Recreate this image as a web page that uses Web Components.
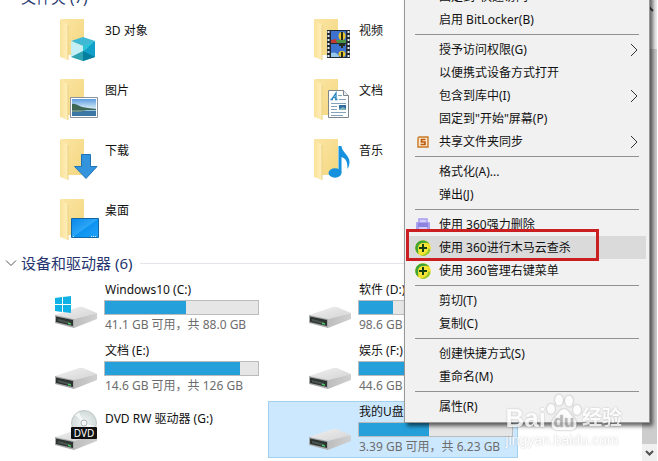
<!DOCTYPE html>
<html lang="zh-CN">
<head>
<meta charset="utf-8">
<title>此电脑</title>
<style>
  body {
    margin: 0;
    background: #fff;
    color: #111;
    font: 12px/16px "Noto Sans", "Noto Sans CJK SC", sans-serif;
  }
</style>
</head>
<body>
<file-explorer>
  <item-group label="文件夹 (7)">
    <folder-tile kind="cube" name="3D 对象"></folder-tile>
    <folder-tile kind="video" name="视频"></folder-tile>
    <folder-tile kind="picture" name="图片"></folder-tile>
    <folder-tile kind="document" name="文档"></folder-tile>
    <folder-tile kind="download" name="下载"></folder-tile>
    <folder-tile kind="music" name="音乐"></folder-tile>
    <folder-tile kind="desktop" name="桌面"></folder-tile>
  </item-group>
  <item-group label="设备和驱动器 (6)">
    <drive-tile kind="windows" name="Windows10 (C:)" used="53">41.1 GB 可用，共 88.0 GB</drive-tile>
    <drive-tile name="软件 (D:)" used="22">98.6 GB</drive-tile>
    <drive-tile name="文档 (E:)" used="88">14.6 GB 可用，共 126 GB</drive-tile>
    <drive-tile name="娱乐 (F:)" used="80">44.6 GB</drive-tile>
    <drive-tile kind="dvd" name="DVD RW 驱动器 (G:)"></drive-tile>
    <drive-tile name="我的U盘" used="46" selected>3.39 GB 可用，共 6.23 GB</drive-tile>
  </item-group>

  <context-menu slot="overlay">
    <menu-item>固定到"快速访问"</menu-item>
    <menu-item>启用 BitLocker(B)</menu-item>
    <menu-line></menu-line>
    <menu-item more>授予访问权限(G)</menu-item>
    <menu-item>以便携式设备方式打开</menu-item>
    <menu-item more>包含到库中(I)</menu-item>
    <menu-item>固定到"开始"屏幕(P)</menu-item>
    <menu-item icon="sync" more>共享文件夹同步</menu-item>
    <menu-line></menu-line>
    <menu-item>格式化(A)...</menu-item>
    <menu-item>弹出(J)</menu-item>
    <menu-line></menu-line>
    <menu-item icon="shred">使用 360强力删除</menu-item>
    <menu-item icon="safe" active>使用 360进行木马云查杀</menu-item>
    <menu-item icon="safe">使用 360管理右键菜单</menu-item>
    <menu-line></menu-line>
    <menu-item>剪切(T)</menu-item>
    <menu-item>复制(C)</menu-item>
    <menu-line></menu-line>
    <menu-item>创建快捷方式(S)</menu-item>
    <menu-item>重命名(M)</menu-item>
    <menu-line></menu-line>
    <menu-item>属性(R)</menu-item>
  </context-menu>
  <site-watermark slot="overlay"></site-watermark>
</file-explorer>

<script>
const folderBase = `
  <path d="M6 6h23v36H13z" fill="url(#back)"/>
  <path d="M5 6l8 6v35l-8-3z" fill="url(#flap)"/>
  <path d="M13 12v35" stroke="#ecd083" stroke-width="1"/>
`;

const folderDefs = `
  <defs>
    <linearGradient id="back" x2="1" y2="1"><stop stop-color="#fbe5a4"/><stop offset="1" stop-color="#f3d67e"/></linearGradient>
    <linearGradient id="flap" x2="1"><stop stop-color="#fae19a"/><stop offset="1" stop-color="#feefbb"/></linearGradient>
    <linearGradient id="sky" y2="1" x2="0"><stop stop-color="#5d9be0"/><stop offset=".5" stop-color="#c9e4f5"/><stop offset="1" stop-color="#4c86bb"/></linearGradient>
    <linearGradient id="screen" x2="1" y2="1"><stop stop-color="#0a86e8"/><stop offset=".5" stop-color="#2ba6f7"/><stop offset=".52" stop-color="#0d93f0"/><stop offset="1" stop-color="#1ea2fa"/></linearGradient>
  </defs>
`;

const badges = {
  cube: `
    <path d="M16 28l12-4 12 4-12 5z" fill="#3fb9d3"/>
    <path d="M16 28l12 5v15l-12-4z" fill="#c4eff5"/>
    <path d="M28 33l12-5v16l-12 4z" fill="#129fca"/>
    <path d="M28 33l12-5-12 11z" fill="#2cc4d6"/>
    <path d="M16 44l12-6v10z" fill="#2fa3b2"/>
    <path d="M28 38l12 6-12 4z" fill="#067f9f"/>`,
  picture: `
    <path d="M15.500 24.500h27v20h-27z" fill="#fff" stroke="#8b9299"/>
    <path d="M17 26h24v17H17z" fill="url(#sky)"/>
    <path d="M17 31c4-1 6 2 10 3l6 1 8 1v1H17z" fill="#3e6656"/>
    <path d="M17 38h24v5H17z" fill="#3b77a5"/>
    <path d="M17 37h15l-7 2h-8z" fill="#6e9184"/>`,
  download: `<path d="M26.500 21.500h9v12h6.500L31 45.500l-11.500-12h7z" fill="#3393dc" stroke="#1f74b8"/>`,
  desktop: `
    <path d="M16.500 25.500h27v19h-27z" fill="url(#screen)" stroke="#1267a4"/>
    <path d="M18 43.500h2M36 43.500h6" stroke="#d4efff" stroke-dasharray="1 1"/>`,
  video: `
    <path d="M18 17h23v28H18z" fill="#222b33"/>
    <path d="M19.500 18v27M39.500 18v27" stroke="#e8eef0" stroke-width="2" stroke-dasharray="2 2"/>
    <path d="M22 18h15v12H22zM22 31h15v13H22z" fill="#3d72cf"/>
    <path d="M22 27l5-1 2 4h-7z" fill="#c43a33"/><path d="M27 27h10v3h-9z" fill="#4c9447"/>
    <ellipse cx="33" cy="23" rx="3.500" ry="4" fill="#e8c52d"/><path d="M33 19v8" stroke="#292d18" stroke-width="2"/>
    <path d="M22 40q5-2 8 3v1h-8z" fill="#97c7e9"/>
    <ellipse cx="33" cy="41" rx="3.500" ry="3" fill="#e8c52d"/><path d="M33 31v4M33 39v5M30 32h6" stroke="#292d18" stroke-width="2"/>`,
  document: `
    <path d="M19.500 17.500h15l5 5v22h-20z" fill="#fff" stroke="#7f868b"/>
    <path d="M34.500 17.500v5h5" fill="#e9eef2" stroke="#7f868b"/>
    <path d="M22.500 26.500l4.500-6.500v6.500M24 24.500h3M21.500 26.500h2.500M26 26.500h2.500" fill="none" stroke="#2585bc" stroke-width="1.300"/>
    <path d="M29 22.500h4M30 26.500h7M22 30.500h15M22 33.500h6M22 36.500h6M22 39.500h15M22 42.500h12" stroke="#84a2b9"/>
    <path d="M30 32h7v5h-7z" fill="#2f6d9f"/><path d="M30 36l4-2 3 2v1h-7z" fill="#80b3b7"/>`,
  music: `
    <ellipse cx="26" cy="40" rx="6.500" ry="4.700" fill="#1591dd"/>
    <path d="M29.500 13h3c0 6 8 9 8 16 0 3-1 5-2 7 0-7-1-10-6-12v16h-3z" fill="#1591dd"/>`
};

const driveDefs = `
  <defs>
    <linearGradient id="top" x2="1" y2="1"><stop stop-color="#f1f1f1"/><stop offset="1" stop-color="#d3d3d4"/></linearGradient>
    <linearGradient id="side" x2="1"><stop stop-color="#bdbdbe"/><stop offset="1" stop-color="#d0d0d1"/></linearGradient>
    <radialGradient id="disc"><stop stop-color="#aebfbe"/><stop offset=".25" stop-color="#e9efef"/><stop offset="1" stop-color="#d2d9d9"/></radialGradient>
  </defs>
`;

const driveBase = `
  <path d="M0 36l24-8q2-.500 4 0l14 6-23 6z" fill="url(#top)"/>
  <path d="M19 40l23-6v6l-23 9z" fill="url(#side)"/>
  <path d="M0 36l19 4v9L0 44z" fill="#a8a9aa"/>
  <path d="M1 37.500l17 3.500v6L1 43z" fill="#2e3432"/>
  <path d="M3 40l12 3v2L3 42z" fill="#4b5552"/>
  <path d="M13 43.500l3 .700v1.600l-3-.700z" fill="#48cf64"/>
`;

const driveExtras = {
  windows: `<path d="M0 19l7-1v7H0zM8 18l8-1v8H8zM0 26h7v7l-7-1zM8 26h8v8l-8-1z" fill="#10b2e6"/>`,
  dvd: `
    <circle cx="29" cy="22" r="12.500" fill="url(#disc)" stroke="#c0c8c8"/>
    <path d="M29 22l-9-8 4-3zM29 22l9 9 3-5z" fill="#fff" opacity=".7"/>
    <circle cx="29" cy="22" r="3" fill="#f7f7f7" stroke="#adb7b6"/>
    <rect x="16" y="26" width="26" height="12" rx="1" fill="#111"/>
    <text x="29" y="36" text-anchor="middle" fill="#fff" font-size="10">DVD</text>`
};

const menuIcons = {
  sync: `
    <path d="M4 3h9v10H3V4z" fill="#fbe8cf" stroke="#c97a27" stroke-width="1.400"/>
    <path d="M10.500 5.500h-4v2.500h3.500v2.500H5.500" fill="none" stroke="#bd5d10" stroke-width="1.700"/>`,
  shred: `
    <path d="M4 5V2h8v3" fill="#d5cffb" stroke="#a79dec" stroke-width="1.500"/>
    <rect x="1" y="5" width="14" height="9" rx="1" fill="#aaa2f0"/>
    <path d="M3 6h10v4H3z" fill="#8b83dd"/><path d="M4 10h8v4H4z" fill="#cfcaff"/>`,
  safe: `
    <circle cx="8" cy="8" r="7.800" fill="#f2e02c"/>
    <path d="M.500 6A7.800 7.800 0 0 1 14.500 4C11 1.500 5 3 3.500 9 3 11 3 12 3.500 14A7.800 7.800 0 0 1 .500 6z" fill="#3fa535"/>
    <path d="M15.500 10A7.800 7.800 0 0 1 5 15.200c4 .300 8-2 8.500-7.200z" fill="#8dc831"/>
    <circle cx="8" cy="8" r="5" fill="#f5e63c"/>
    <path d="M8 4v8M4 8h8" stroke="#173f16" stroke-width="2"/>`
};

class FileExplorer extends HTMLElement {
  constructor() {
    super();
    this.attachShadow({ mode: 'open' });
    this.shadowRoot.innerHTML = `
      <style>
        :host {
          display: flex;
          position: relative;
          height: 100vh;
          overflow: hidden;
        }

        main {
          flex: 1;
          min-width: 0;
          /* the list is scrolled past the top of the window */
          margin-top: -16px;
        }
      </style>
      <main><slot></slot></main>
      <scroll-rail></scroll-rail>
      <slot name="overlay"></slot>
    `;
  }
}

class ItemGroup extends HTMLElement {
  constructor() {
    super();
    this.attachShadow({ mode: 'open' });
    this.shadowRoot.innerHTML = `
      <style>
        :host {
          display: block;
          padding-top: 1px;
        }

        header {
          display: flex;
          align-items: center;
          height: 24px;
          padding-left: 5px;
          margin-bottom: 4px;
        }

        button {
          display: flex;
          width: 16px;
          padding: 0;
          border: 0;
          background: none;
        }

        h2 {
          margin: 0;
          color: #26356f;
          font-size: 15px;
          font-weight: 400;
          line-height: 24px;
          white-space: nowrap;
        }

        hr {
          flex: 1;
          height: 1px;
          margin: 0 0 0 8px;
          border: 0;
          background: #e3e6ea;
        }

        .tiles {
          display: grid;
          grid-template-columns: repeat(auto-fill, 250px);
          gap: var(--row-gap, 3px) 4px;
          padding-left: 14px;
        }
      </style>
      <header>
        <button aria-label="折叠">
          <svg width="12" height="12" viewBox="0 0 12 12"><path d="M1 3.500l5 5 5-5" fill="none" stroke="#555"/></svg>
        </button>
        <h2>${this.getAttribute('label')}</h2>
        <hr>
      </header>
      <div class="tiles"><slot></slot></div>
    `;
    if (this.querySelector('drive-tile')) this.style.setProperty('--row-gap', '4px');
  }
}

const tileStyle = `
  :host {
    display: flex;
    gap: 5px;
    box-sizing: border-box;
    height: 57px;
    padding-left: 41px;
  }

  svg {
    flex: none;
  }

  .name {
    padding: 10px 0 0 1px;
  }
`;

class FolderTile extends HTMLElement {
  constructor() {
    super();
    this.attachShadow({ mode: 'open' });
    this.shadowRoot.innerHTML = `
      <style>${tileStyle}</style>
      <svg width="44" height="57" viewBox="0 0 44 57">
        ${folderDefs}${folderBase}${badges[this.getAttribute('kind')]}
      </svg>
      <div class="name">${this.getAttribute('name')}</div>
    `;
  }
}

class DriveTile extends HTMLElement {
  constructor() {
    super();
    const used = this.getAttribute('used');
    const name = this.getAttribute('name');
    this.attachShadow({ mode: 'open' });
    this.shadowRoot.innerHTML = `
      <style>
        ${tileStyle}

        :host([selected]) {
          background: #cce8ff;
          box-shadow: inset 0 0 0 1px #a2d0ee;
        }

        .info {
          display: flex;
          flex-direction: column;
          gap: 2px;
          padding-top: 3px;
        }

        .info .name {
          padding-top: 0;
        }

        .bar {
          box-sizing: border-box;
          width: 155px;
          height: 15px;
          border: 1px solid #bcbcbc;
          background: #e6e6e6;
        }

        .fill {
          width: ${used}%;
          height: 100%;
          background: #26a0da;
        }

        .space {
          padding-left: 1px;
          color: #6d6d6d;
          white-space: nowrap;
        }
      </style>
      <svg width="44" height="57" viewBox="0 0 44 57">
        ${driveDefs}${driveBase}${driveExtras[this.getAttribute('kind')] || ''}
      </svg>
      ${used ? `
        <div class="info">
          <div class="name">${name}</div>
          <div class="bar" role="meter" aria-label="${name}" aria-valuenow="${used}"><div class="fill"></div></div>
          <div class="space"><slot></slot></div>
        </div>
      ` : `<div class="name">${name}</div>`}
    `;
  }
}

class ScrollRail extends HTMLElement {
  constructor() {
    super();
    this.attachShadow({ mode: 'open' });
    this.shadowRoot.innerHTML = `
      <style>
        :host {
          display: flex;
          flex-direction: column;
          width: 15px;
          margin-right: 1px;
          background: #f0f0f0;
        }

        button {
          display: flex;
          justify-content: center;
          align-items: center;
          height: 17px;
          padding: 0;
          border: 0;
          background: none;
        }

        .thumb {
          flex: 1;
          margin-top: 32px;
          background: #cdcdcd;
        }
      </style>
      <button aria-label="向上"><svg width="9" height="8" viewBox="0 0 9 8"><path d="M1 6l3.500-3.500L8 6" fill="none" stroke="#505050" stroke-width="2"/></svg></button>
      <div class="thumb"></div>
      <button aria-label="向下"><svg width="9" height="8" viewBox="0 0 9 8"><path d="M1 2l3.500 3.500L8 2" fill="none" stroke="#505050" stroke-width="2"/></svg></button>
    `;
  }
}

class ContextMenu extends HTMLElement {
  constructor() {
    super();
    this.attachShadow({ mode: 'open' });
    this.shadowRoot.innerHTML = `
      <style>
        :host {
          position: absolute;
          top: -19px;
          left: 404px;
          box-sizing: border-box;
          width: 246px;
          padding: 3px 3px 4px;
          border: 1px solid #989898;
          background: #f1f1f1;
          box-shadow: 3px 3px 4px rgba(0, 0, 0, .6);
        }
      </style>
      <div role="menu"><slot></slot></div>
    `;
  }
}

class MenuItem extends HTMLElement {
  constructor() {
    super();
    this.attachShadow({ mode: 'open' });
    this.shadowRoot.innerHTML = `
      <style>
        :host {
          display: block;
          position: relative;
        }

        button {
          display: grid;
          grid-template-columns: 16px 1fr 8px;
          column-gap: 8px;
          align-items: center;
          width: 100%;
          height: 23px;
          padding: 0 8px 0 7px;
          border: 0;
          background: none;
          color: inherit;
          font: inherit;
          text-align: left;
          white-space: nowrap;
        }

        :host([active]) button {
          background: #dadada;
        }

        .marker {
          position: absolute;
          inset: -7px 47px -2px -2px;
          border: 3px solid #cb1e20;
        }
      </style>
      <button role="menuitem">
        <svg width="16" height="16" viewBox="0 0 16 16">${menuIcons[this.getAttribute('icon')] || ''}</svg>
        <span><slot></slot></span>
        ${this.hasAttribute('more') ? '<svg width="8" height="14" viewBox="0 0 8 14"><path d="M1 1l6 6-6 6" fill="none" stroke="#333"/></svg>' : ''}
      </button>
      ${this.hasAttribute('active') ? '<div class="marker"></div>' : ''}
    `;
  }
}

class MenuLine extends HTMLElement {
  constructor() {
    super();
    this.attachShadow({ mode: 'open' });
    this.shadowRoot.innerHTML = `
      <style>
        :host {
          display: block;
          padding: 3px 7px;
        }

        hr {
          height: 1px;
          margin: 0;
          border: 0;
          background: #919191;
        }
      </style>
      <hr>
    `;
  }
}

class SiteWatermark extends HTMLElement {
  constructor() {
    super();
    this.attachShadow({ mode: 'open' });
    this.shadowRoot.innerHTML = `
      <style>
        :host {
          position: absolute;
          right: 36px;
          bottom: 13px;
          color: #fff;
          font-family: "Liberation Sans", "Noto Sans CJK SC", sans-serif;
          text-shadow: 0 0 2px rgba(0, 0, 0, .3);
          opacity: .8;
        }

        .logo {
          display: flex;
          align-items: flex-end;
          font-size: 26px;
          font-weight: 700;
          line-height: 28px;
        }

        .cn {
          font-size: 20px;
        }

        .paw {
          filter: drop-shadow(0 0 1px rgba(0, 0, 0, .4));
        }

        .site {
          font-size: 14px;
        }
      </style>
      <div class="logo">
        <span>Bai</span>
        <svg class="paw" width="36" height="38" viewBox="0 0 36 38">
          <g fill="#fff">
            <ellipse cx="13" cy="6" rx="4" ry="5.500"/><ellipse cx="23" cy="7" rx="4" ry="5.500"/>
            <ellipse cx="5" cy="15" rx="4" ry="5"/><ellipse cx="31" cy="16" rx="4" ry="5"/>
            <path d="M18 15c4 0 5 4 9 8 5 4 5 13-2 13H11c-7 0-7-9-2-13 4-4 5-8 9-8z"/>
          </g>
          <text x="18" y="33" text-anchor="middle" fill="#aaa" font-size="17">du</text>
        </svg>
        <span class="cn">经验</span>
      </div>
      <div class="site">jingyan.baidu.com</div>
    `;
  }
}

customElements.define('file-explorer', FileExplorer);
customElements.define('item-group', ItemGroup);
customElements.define('folder-tile', FolderTile);
customElements.define('drive-tile', DriveTile);
customElements.define('scroll-rail', ScrollRail);
customElements.define('context-menu', ContextMenu);
customElements.define('menu-item', MenuItem);
customElements.define('menu-line', MenuLine);
customElements.define('site-watermark', SiteWatermark);
</script>
</body>
</html>
